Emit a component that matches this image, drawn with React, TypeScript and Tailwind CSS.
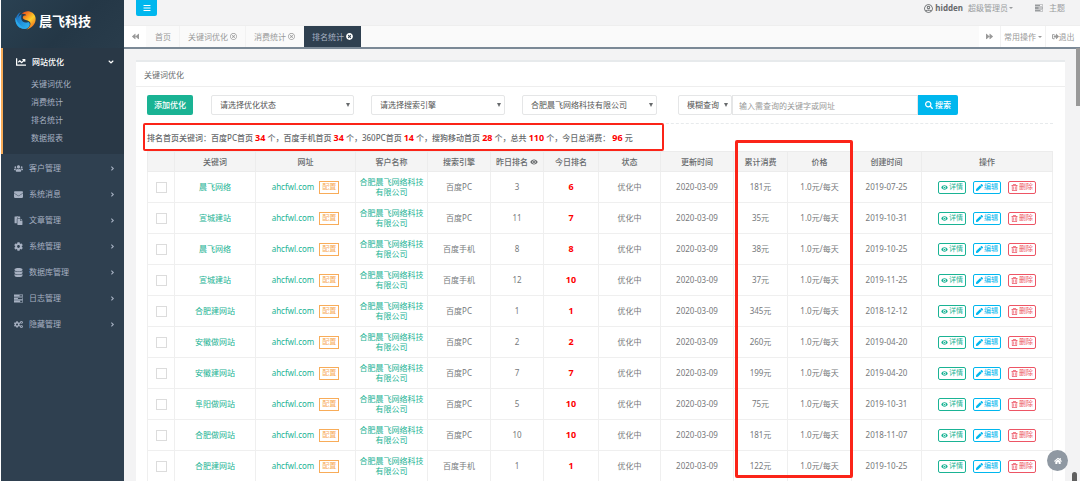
import type { ReactNode } from 'react';
import type { IconType } from 'react-icons';
import {
  FaAngleDown,
  FaAngleRight,
  FaBackward,
  FaBars,
  FaChartLine,
  FaCog,
  FaCogs,
  FaDatabase,
  FaEnvelope,
  FaForward,
  FaHome,
  FaPaste,
  FaPen,
  FaRegTimesCircle,
  FaRegTrashAlt,
  FaRegUserCircle,
  FaSearch,
  FaSignOutAlt,
  FaTimesCircle,
  FaUsers,
} from 'react-icons/fa';
import { MdVisibility } from 'react-icons/md';

type IconProps = { className?: string };

const subMenu = ['关键词优化', '消费统计', '排名统计', '数据报表'];

const menu: { icon: IconType | typeof TasksIcon; label: string }[] = [
  { icon: FaUsers, label: '客户管理' },
  { icon: FaEnvelope, label: '系统消息' },
  { icon: FaPaste, label: '文章管理' },
  { icon: FaCog, label: '系统管理' },
  { icon: FaDatabase, label: '数据库管理' },
  { icon: TasksIcon, label: '日志管理' },
  { icon: FaCogs, label: '隐藏管理' },
];

const stats: [string, number, string][] = [
  ['百度PC首页', 34, '个，'],
  ['百度手机首页', 34, '个，'],
  ['360PC首页', 14, '个，'],
  ['搜狗移动首页', 28, '个，'],
  ['总共', 110, '个，'],
  ['今日总消费：', 96, '元'],
];

const rows = [
  { id: 1, keyword: '晨飞网络', engine: '百度PC', prev: 3, rank: 6, cost: 181, created: '2019-07-25' },
  { id: 2, keyword: '宣城建站', engine: '百度PC', prev: 11, rank: 7, cost: 35, created: '2019-10-31' },
  { id: 3, keyword: '晨飞网络', engine: '百度手机', prev: 8, rank: 8, cost: 38, created: '2019-10-25' },
  { id: 4, keyword: '宣城建站', engine: '百度手机', prev: 12, rank: 10, cost: 37, created: '2019-11-25' },
  { id: 5, keyword: '合肥建网站', engine: '百度PC', prev: 1, rank: 1, cost: 345, created: '2018-12-12' },
  { id: 6, keyword: '安徽做网站', engine: '百度PC', prev: 2, rank: 2, cost: 260, created: '2019-04-20' },
  { id: 7, keyword: '安徽建网站', engine: '百度PC', prev: 7, rank: 7, cost: 199, created: '2019-04-20' },
  { id: 8, keyword: '阜阳做网站', engine: '百度PC', prev: 5, rank: 10, cost: 75, created: '2019-10-31' },
  { id: 9, keyword: '合肥做网站', engine: '百度PC', prev: 10, rank: 10, cost: 181, created: '2018-11-07' },
  { id: 10, keyword: '合肥建网站', engine: '百度手机', prev: 1, rank: 1, cost: 122, created: '2019-10-25' },
];

function TasksIcon({ className }: IconProps) {
  return (
    <svg viewBox="0 0 16 14" className={className} fill="currentColor" fillRule="evenodd" aria-hidden="true">
      <path d="M0 0h16v4H0zM10 1h5v2h-5z" />
      <path d="M0 5h16v4H0zM7 6h8v2H7z" />
      <path d="M0 10h16v4H0zM11 11h4v2h-4z" />
    </svg>
  );
}

function Logo() {
  return (
    <svg viewBox="0 0 44 42" className="h-5 w-[21px]" aria-hidden="true">
      <defs>
        <linearGradient id="flame" x1="0" y1="0" x2="0.7" y2="1">
          <stop offset="0" stopColor="#e23a1e" />
          <stop offset="0.3" stopColor="#f5851f" />
          <stop offset="0.6" stopColor="#fdd02c" />
          <stop offset="1" stopColor="#f0691d" />
        </linearGradient>
        <linearGradient id="wave" x1="0" y1="0" x2="1" y2="1">
          <stop offset="0" stopColor="#1b64b6" />
          <stop offset="0.6" stopColor="#2398e0" />
          <stop offset="1" stopColor="#35b8f0" />
        </linearGradient>
      </defs>
      <path d="M12 4C1 9-3 26 7 35c7 6 19 6 23-1 2-4 1-7-2-9-6 3-14 1-15-7 0-4 0-6 1-9-4 2-6 4-7 8 0-5 2-9 5-13z" fill="url(#wave)" />
      <path d="M1 15c-2 9 2 18 9 22 5 3 12 4 17 2C15 37 5 29 1 15z" fill="#2ba9ea" />
      <path d="M14 8C22-1 40 1 43 16c2 12-7 22-19 25 8-5 11-13 6-17-5-3-10-2-13-6-2-4 1-7 7-7-3-3-7-3-10-3z" fill="url(#flame)" />
    </svg>
  );
}

function Sidebar() {
  return (
    <aside className="flex w-[124px] shrink-0 flex-col border-l border-white bg-[#2f4050] text-[8px] text-[#a7b1c2]">
      <div className="flex h-12 items-start gap-[3px] bg-[linear-gradient(135deg,#2a4152_0%,#243746_55%,#293c4b_100%)] pt-[10px] pl-[14px] text-[13px] leading-[22px] font-bold text-white">
        <Logo />
        晨飞科技
      </div>
      <nav>
        <div className="h-[106px] border-l-2 border-[#f8ac59] bg-[#293846]">
          <a href="#site" className="flex h-[27px] items-center pr-[9px] pl-[13px] font-medium text-white">
            <FaChartLine className="size-[10px]" />
            <span className="ml-[6px] flex-1">网站优化</span>
            <FaAngleDown className="size-2" />
          </a>
          <ul>
            {subMenu.map((label) => (
              <li key={label}>
                <a href="#sub" className="block h-[18px] pl-7 leading-[18px]">
                  {label}
                </a>
              </li>
            ))}
          </ul>
        </div>
        <ul className="pt-px">
          {menu.map(({ icon: Icon, label }) => (
            <li key={label}>
              <a href="#menu" className="flex h-[26px] items-center pr-2 pl-[13px]">
                <Icon className="size-[9px]" />
                <span className="ml-[6px] flex-1">{label}</span>
                <FaAngleRight className="size-[7px]" />
              </a>
            </li>
          ))}
        </ul>
      </nav>
    </aside>
  );
}

function Caret() {
  return <span className="inline-block border-x-2 border-t-2 border-x-transparent border-t-current" />;
}

function TopBar() {
  return (
    <header className="flex h-[25px] items-start justify-between bg-[#f3f3f4] pr-[15px] pl-3 text-[8px] text-[#999c9e]">
      <button aria-label="菜单" className="flex h-4 w-[21px] items-center justify-center rounded-b-xs bg-[#00b7ee] text-white">
        <FaBars className="size-2" />
      </button>
      <div className="flex h-4 items-center">
        <FaRegUserCircle className="size-[9px] text-[#676a6c]" />
        <strong className="ml-[2px] text-[#676a6c]">hidden</strong>
        <a href="#role" className="ml-[5px] flex items-center gap-px">
          超级管理员
          <Caret />
        </a>
        <a href="#theme" className="ml-[22px] flex items-center gap-[6px]">
          <TasksIcon className="size-2" />
          主题
        </a>
      </div>
    </header>
  );
}

function Tabs() {
  return (
    <div className="flex h-6 shrink-0 items-stretch border-t border-b-2 border-t-[#eeeeee] border-b-[#7b8996] bg-[#fafafa] text-[8px] text-[#999999]">
      <button aria-label="上一页" className="flex w-[22px] items-center justify-center bg-white">
        <FaBackward className="size-[7px]" />
      </button>
      <a href="#home" className="flex items-center border-r border-[#f2f2f2] pr-2 pl-[9px]">首页</a>
      <a href="#keywords" className="flex items-center gap-[2px] border-r border-[#f2f2f2] px-2">
        关键词优化
        <FaRegTimesCircle className="size-[7px]" />
      </a>
      <a href="#cost" className="flex items-center gap-[2px] pr-[9px] pl-2">
        消费统计
        <FaRegTimesCircle className="size-[7px]" />
      </a>
      <a href="#rank" className="flex items-center gap-[2px] bg-[#2f4050] px-2 text-[#a7b1c2]">
        排名统计
        <FaTimesCircle className="size-[7px] text-white" />
      </a>
      <div className="flex-1" />
      <button aria-label="下一页" className="flex w-[22px] items-center justify-center border-r border-[#f2f2f2] bg-white">
        <FaForward className="size-[7px]" />
      </button>
      <button className="flex w-[45px] items-center justify-center gap-[2px] border-r border-[#f2f2f2] bg-white">
        常用操作
        <Caret />
      </button>
      <button className="flex w-[34px] items-center justify-center bg-white">
        <FaSignOutAlt className="size-[7px]" />
        退出
      </button>
    </div>
  );
}

function Select({ label, className }: { label: string; className: string }) {
  return (
    <div className={`relative h-5 ${className}`}>
      <select
        aria-label={label}
        className="h-full w-full appearance-none rounded-xs border border-[#e5e6e7] bg-white pl-2 text-[8px] text-[#555555]"
      >
        <option>{label}</option>
      </select>
      <span className="pointer-events-none absolute top-2 right-1 border-x-2 border-t-4 border-x-transparent border-t-[#676a6c]" />
    </div>
  );
}

function Filters() {
  return (
    <form className="flex h-[29px] items-start border-b border-dashed border-[#e7eaec] text-[8px]">
      <button type="button" className="h-5 w-[46px] rounded-xs bg-[#1ab394] font-medium text-white">添加优化</button>
      <Select label="请选择优化状态" className="ml-[18px] w-[143px]" />
      <Select label="请选择搜索引擎" className="ml-[17px] w-[134px]" />
      <Select label="合肥晨飞网络科技有限公司" className="ml-[17px] w-[135px]" />
      <Select label="模糊查询" className="ml-[21px] w-[54px]" />
      <input
        aria-label="关键字或网址"
        placeholder="输入需查询的关键字或网址"
        className="h-5 w-[186px] border border-[#e5e6e7] px-[6px] placeholder:text-[#999999]"
      />
      <button type="button" className="flex h-5 w-10 items-center justify-center gap-[2px] rounded-r-xs bg-[#00b7ee] font-medium text-white">
        <FaSearch className="size-2" />
        搜索
      </button>
    </form>
  );
}

function Summary() {
  return (
    <div className="relative flex h-[27px] items-center text-[8px] font-medium whitespace-pre text-[#676a6c]">
      <span>排名首页关键词：</span>
      {stats.map(([label, value, unit]) => (
        <span key={label}>
          {label} <b className="text-[9px] text-[#fe0000]">{value}</b> {unit}
        </span>
      ))}
      <div className="pointer-events-none absolute -top-px -left-1 h-7 w-[521px] rounded-xs border-2 border-[#fb2418]" />
    </div>
  );
}

function ActionButton({ icon: Icon, className, children }: { icon: IconType; className: string; children: ReactNode }) {
  return (
    <button className={`flex h-[13px] w-7 items-center justify-center gap-px rounded-xs border text-[7px] ${className}`}>
      <Icon className="size-[7px]" />
      {children}
    </button>
  );
}

const th = 'border border-[#ececec] p-0 font-medium';
const td = 'border border-[#efefef] p-0';

function RankTable() {
  return (
    <div className="relative">
      <table className="w-full table-fixed border-collapse text-center text-[8px] leading-[10px] text-[#76797b]">
        <colgroup>
          <col className="w-[27px]" />
          <col className="w-[81px]" />
          <col className="w-[100px]" />
          <col className="w-[72px]" />
          <col className="w-[63px]" />
          <col className="w-[53px]" />
          <col className="w-[55px]" />
          <col className="w-[62px]" />
          <col className="w-[73px]" />
          <col className="w-[54px]" />
          <col className="w-[64px]" />
          <col className="w-[70px]" />
          <col />
        </colgroup>
        <thead className="bg-[#f4f4f4] text-[#676a6c]">
          <tr className="h-5">
            <th className={th} />
            <th className={th}>关键词</th>
            <th className={th}>网址</th>
            <th className={th}>客户名称</th>
            <th className={th}>搜索引擎</th>
            <th className={th}>
              昨日排名 <MdVisibility className="inline size-2" />
            </th>
            <th className={th}>今日排名</th>
            <th className={th}>状态</th>
            <th className={th}>更新时间</th>
            <th className={th}>累计消费</th>
            <th className={th}>价格</th>
            <th className={th}>创建时间</th>
            <th className={th}>操作</th>
          </tr>
        </thead>
        <tbody>
          {rows.map((row) => (
            <tr key={row.id} className="h-[31px]">
              <td className={td}>
                <input
                  type="checkbox"
                  aria-label={row.keyword}
                  className="mx-auto block size-[11px] appearance-none border border-[#dcdcdc] bg-white"
                />
              </td>
              <td className={td}>
                <a href="#keyword" className="text-[#1ab394]">{row.keyword}</a>
              </td>
              <td className={td}>
                <div className="flex items-center justify-center gap-[5px]">
                  <a href="#url" className="text-[#1ab394]">ahcfwl.com</a>
                  <button className="h-[13px] w-5 border border-[#f8ac59] text-[7px] text-[#f8ac59]">配置</button>
                </div>
              </td>
              <td className={td}>
                <a href="#client" className="block px-[3px] text-[#1ab394]">合肥晨飞网络科技有限公司</a>
              </td>
              <td className={td}>{row.engine}</td>
              <td className={td}>{row.prev}</td>
              <td className={`${td} text-[9px] font-bold text-[#fe0000]`}>{row.rank}</td>
              <td className={td}>优化中</td>
              <td className={td}>2020-03-09</td>
              <td className={td}>{row.cost}元</td>
              <td className={td}>1.0元/每天</td>
              <td className={td}>{row.created}</td>
              <td className={td}>
                <div className="flex justify-center gap-[7px]">
                  <ActionButton icon={MdVisibility} className="border-[#1ab394] text-[#1ab394]">详情</ActionButton>
                  <ActionButton icon={FaPen} className="border-[#00b7ee] text-[#00b7ee]">编辑</ActionButton>
                  <ActionButton icon={FaRegTrashAlt} className="border-[#ed5565] text-[#ed5565]">删除</ActionButton>
                </div>
              </td>
            </tr>
          ))}
        </tbody>
      </table>
      <div className="pointer-events-none absolute -top-[11px] left-[588px] h-[338px] w-[118px] rounded-xs border-3 border-[#fb2418]" />
    </div>
  );
}

export default function App() {
  return (
    <div className="relative flex h-screen overflow-hidden bg-[#f3f3f4] font-['Noto_Sans','Noto_Sans_CJK_SC',sans-serif] text-[#676a6c]">
      <Sidebar />
      <div className="flex min-w-0 flex-1 flex-col">
        <TopBar />
        <Tabs />
        <main className="min-h-0 flex-1 overflow-hidden pt-[11px] pr-[15px] pl-3">
          <section className="border-t-2 border-[#e7eaec] bg-white">
            <h1 className="h-[25px] border-b border-[#eeeeee] px-2 text-[8px] leading-[25px]">关键词优化</h1>
            <div className="pt-2 pr-3 pl-[11px]">
              <Filters />
              <Summary />
              <RankTable />
            </div>
          </section>
        </main>
      </div>
      <div className="absolute top-12 right-0 h-[58px] w-1 bg-[#999999]" />
      <div className="absolute right-[3px] bottom-0 h-[9px] w-[5px] rounded-t-sm bg-[#606060]" />
      <button aria-label="首页" className="absolute right-3 bottom-[10px] flex size-[21px] items-center justify-center rounded-full bg-[#8f98a2] text-white">
        <FaHome className="size-2" />
      </button>
    </div>
  );
}
